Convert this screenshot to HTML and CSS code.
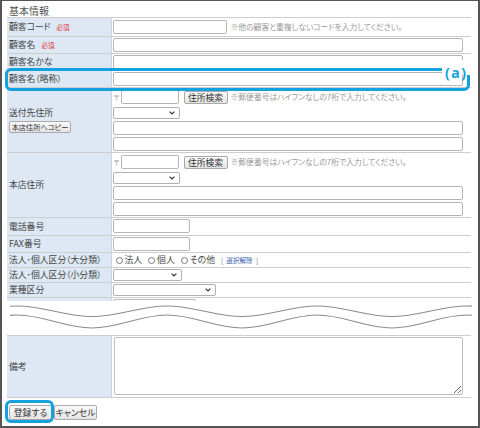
FILE: index.html
```html
<!DOCTYPE html>
<html lang="ja">
<head>
<meta charset="utf-8">
<title>基本情報</title>
<link rel="stylesheet" href="styles.css">
</head>
<body>
<div class="frame">
  <div class="title">基本情報</div>
  <div class="cut">
    <table class="form">
      <colgroup><col class="c-label"><col></colgroup>
      <tr class="r-first">
        <th>顧客コード<span class="req">必須</span></th>
        <td><div class="line"><input class="in w-code"><span class="hint hint-code">※他の顧客と重複しないコードを入力してください。</span></div></td>
      </tr>
      <tr>
        <th>顧客名<span class="req">必須</span></th>
        <td><input class="in w-full"></td>
      </tr>
      <tr>
        <th>顧客名かな</th>
        <td><input class="in w-full"></td>
      </tr>
      <tr>
        <th>顧客名（略称）</th>
        <td><input class="in w-full"></td>
      </tr>
      <tr class="r-addr">
        <th><div class="addr-label">送付先住所</div><button class="btn btn-copy">本店住所へコピー</button></th>
        <td>
          <div class="line"><span class="zip">〒</span><input class="in w-zip"><button class="btn btn-search">住所検索</button><span class="hint">※郵便番号はハイフンなしの7桁で入力してください。</span></div>
          <div class="sel w-pref"><select></select><svg class="chev" width="6" height="4" viewBox="0 0 6 4"><path d="M0.6 0.6 L3 3 L5.4 0.6" fill="none" stroke="#333" stroke-width="1.2"/></svg></div>
          <input class="in w-full stack">
          <input class="in w-full stack">
        </td>
      </tr>
      <tr class="r-addr">
        <th>本店住所</th>
        <td>
          <div class="line"><span class="zip">〒</span><input class="in w-zip"><button class="btn btn-search">住所検索</button><span class="hint">※郵便番号はハイフンなしの7桁で入力してください。</span></div>
          <div class="sel w-pref"><select></select><svg class="chev" width="6" height="4" viewBox="0 0 6 4"><path d="M0.6 0.6 L3 3 L5.4 0.6" fill="none" stroke="#333" stroke-width="1.2"/></svg></div>
          <input class="in w-full stack">
          <input class="in w-full stack">
        </td>
      </tr>
      <tr class="r-tel">
        <th>電話番号</th>
        <td><input class="in w-tel"></td>
      </tr>
      <tr>
        <th>FAX番号</th>
        <td><input class="in w-tel"></td>
      </tr>
      <tr>
        <th>法人･個人区分（大分類）</th>
        <td>
          <div class="radios">
            <span class="opt"><span class="rd"></span>法人</span>
            <span class="opt"><span class="rd"></span>個人</span>
            <span class="opt"><span class="rd"></span>その他</span>
            <span class="clear">[<a href="#">選択解除</a>]</span>
          </div>
        </td>
      </tr>
      <tr>
        <th>法人･個人区分（小分類）</th>
        <td><div class="sel w-sub"><select></select><svg class="chev" width="6" height="4" viewBox="0 0 6 4"><path d="M0.6 0.6 L3 3 L5.4 0.6" fill="none" stroke="#333" stroke-width="1.2"/></svg></div></td>
      </tr>
      <tr>
        <th>業種区分</th>
        <td><div class="sel w-ind"><select></select><svg class="chev" width="6" height="4" viewBox="0 0 6 4"><path d="M0.6 0.6 L3 3 L5.4 0.6" fill="none" stroke="#333" stroke-width="1.2"/></svg></div></td>
      </tr>
      <tr>
        <th>&nbsp;</th>
        <td><input class="in w-part"></td>
      </tr>
    </table>
  </div>
  <svg class="wave" width="476" height="34" viewBox="0 0 476 34">
    <defs><clipPath id="wc"><rect x="8" y="0" width="462" height="34"/></clipPath></defs>
    <g clip-path="url(#wc)" fill="none" stroke="#8c8c8c" stroke-width="1.1">
      <path d="M -60 15.5 C -32.7 15.5 -12.3 5 15 5 C 42.3 5 62.7 15.5 90 15.5 C 117.3 15.5 137.7 5 165 5 C 192.3 5 212.7 15.5 240 15.5 C 267.3 15.5 287.7 5 315 5 C 342.3 5 362.7 15.5 390 15.5 C 417.3 15.5 437.7 5 465 5 C 492.3 5 512.7 15.5 540 15.5"/>
      <path d="M -60 27 C -32.7 27 -12.3 14 15 14 C 42.3 14 62.7 27 90 27 C 117.3 27 137.7 14 165 14 C 192.3 14 212.7 27 240 27 C 267.3 27 287.7 14 315 14 C 342.3 14 362.7 27 390 27 C 417.3 27 437.7 14 465 14 C 492.3 14 512.7 27 540 27"/>
    </g>
  </svg>
  <table class="form">
    <colgroup><col class="c-label"><col></colgroup>
    <tr class="r-note">
      <th>備考</th>
      <td><textarea class="note"></textarea></td>
    </tr>
  </table>
  <div class="actions">
    <button class="btn btn-act">登録する</button>
    <button class="btn btn-act">キャンセル</button>
  </div>
  <div class="hl hl-row"></div>
  <div class="hl-tag">(a)</div>
  <div class="hl hl-btn"></div>
</div>
</body>
</html>
```
FILE: styles.css
```css
body {
  margin: 0;
  font-family: "Noto Sans CJK JP", "Noto Sans", sans-serif;
  font-feature-settings: "palt";
  color: #4a4a4a;
}

.frame {
  width: 480px;
  height: 428px;
  box-sizing: border-box;
  border: 2px solid #555;
  border-top: 1px solid #555;
  position: relative;
  overflow: hidden;
  background: #fff;
}

.title {
  height: 16px;
  box-sizing: border-box;
  padding: 4px 0 0 7px;
  font-size: 10px;
  line-height: 12px;
  color: #555;
}

.cut {
  height: 284px;
  overflow: hidden;
}

.form {
  margin-left: 5px;
  width: 464px;
  border-collapse: collapse;
  table-layout: fixed;
}

.c-label {
  width: 104px;
}

.form th,
.form td {
  border-top: 1px solid #cdcdcd;
  border-bottom: 1px solid #cdcdcd;
  padding: 1px 0 1px 1px;
  vertical-align: middle;
}

.form th {
  background: #dde8f4;
  border-right: 1px solid #c9d5e2;
  text-align: left;
  font-weight: normal;
  font-size: 8.8px;
  line-height: 12px;
  padding-left: 2px;
  white-space: nowrap;
  color: #444;
}

.r-first td {
  padding-top: 2px;
  padding-bottom: 2px;
}

.r-addr td {
  padding-top: 2px;
  padding-bottom: 1px;
}

.r-tel td {
  padding-bottom: 2px;
}

.r-note td {
  padding-bottom: 2px;
}

.in {
  display: block;
  box-sizing: border-box;
  height: 14px;
  border: 1px solid #b5b5b5;
  border-radius: 2px;
  background: #fff;
  padding: 0;
  margin: 0;
}

.stack {
  margin-top: 2px;
}

.w-code { width: 114px; }
.w-full { width: 350px; }
.w-zip { width: 58px; }
.w-tel { width: 77px; }
.w-part { width: 83px; }

.line {
  display: flex;
  align-items: center;
  height: 14px;
}

.hint {
  font-size: 7.8px;
  line-height: 12px;
  color: #999;
  margin-left: 3px;
  white-space: nowrap;
}

.hint-code {
  margin-left: 4px;
}

.req {
  color: #e33030;
  font-size: 6.5px;
  margin-left: 6px;
}

.zip {
  width: 7px;
  margin-left: 1px;
  font-size: 7px;
  line-height: 12px;
  color: #999;
}

.btn {
  font-family: inherit;
  font-feature-settings: "palt";
  box-sizing: border-box;
  border: 1px solid #a9a9a9;
  border-radius: 2px;
  background: linear-gradient(#fafafa, #e4e4e4);
  color: #333;
  padding: 0;
  margin: 0;
  white-space: nowrap;
}

.btn-search {
  width: 44px;
  height: 13px;
  font-size: 8.8px;
  line-height: 11px;
  margin-left: 5px;
}

.btn-copy {
  display: block;
  width: 62px;
  height: 12px;
  font-size: 7.2px;
  line-height: 10px;
  margin-top: 2px;
}

.sel {
  position: relative;
  height: 12px;
}

.r-addr .sel {
  margin-top: 3px;
}

.sel select {
  display: block;
  appearance: none;
  -webkit-appearance: none;
  width: 100%;
  height: 12px;
  box-sizing: border-box;
  border: 1px solid #b0b0b0;
  border-radius: 2px;
  background: #fff;
  padding: 0;
  margin: 0;
}

.chev {
  position: absolute;
  right: 5px;
  top: 4px;
}

.w-pref { width: 67px; }
.w-sub { width: 69px; }
.w-ind { width: 103px; }

.radios {
  display: flex;
  align-items: center;
  font-size: 8.8px;
  line-height: 12px;
  padding-left: 3px;
  white-space: nowrap;
}

.opt {
  display: flex;
  align-items: center;
  margin-right: 6px;
}

.rd {
  width: 7px;
  height: 7px;
  box-sizing: border-box;
  border: 1px solid #777;
  border-radius: 50%;
  margin-right: 2px;
}

.clear {
  font-size: 7px;
  color: #777;
}

.clear a {
  color: #3a62b0;
  font-size: 6.6px;
  text-decoration: none;
  margin: 0 3px;
}

.wave {
  display: block;
}

.note {
  display: block;
  width: 349px;
  height: 58px;
  box-sizing: border-box;
  border: 1px solid #bdbdbd;
  border-radius: 2px;
  margin: 0 0 0 1px;
  padding: 0;
}

.actions {
  display: flex;
  gap: 2px;
  padding: 7px 0 0 7px;
}

.btn-act {
  width: 43px;
  height: 15px;
  font-size: 8.8px;
  line-height: 13px;
}

.hl {
  position: absolute;
  box-sizing: border-box;
  border: 3px solid #13a1e0;
  border-radius: 6px;
}

.hl-row {
  left: 3px;
  top: 67px;
  width: 465px;
  height: 23px;
}

.hl-btn {
  left: 3px;
  top: 399px;
  width: 49px;
  height: 23px;
}

.hl-tag {
  position: absolute;
  left: 440px;
  top: 59px;
  width: 30px;
  height: 15px;
  box-sizing: border-box;
  padding-left: 3px;
  background: #fff;
  color: #13a1e0;
  font-family: "Noto Sans", sans-serif;
  font-weight: bold;
  font-size: 14px;
  line-height: 26px;
  letter-spacing: 1.5px;
}
```
